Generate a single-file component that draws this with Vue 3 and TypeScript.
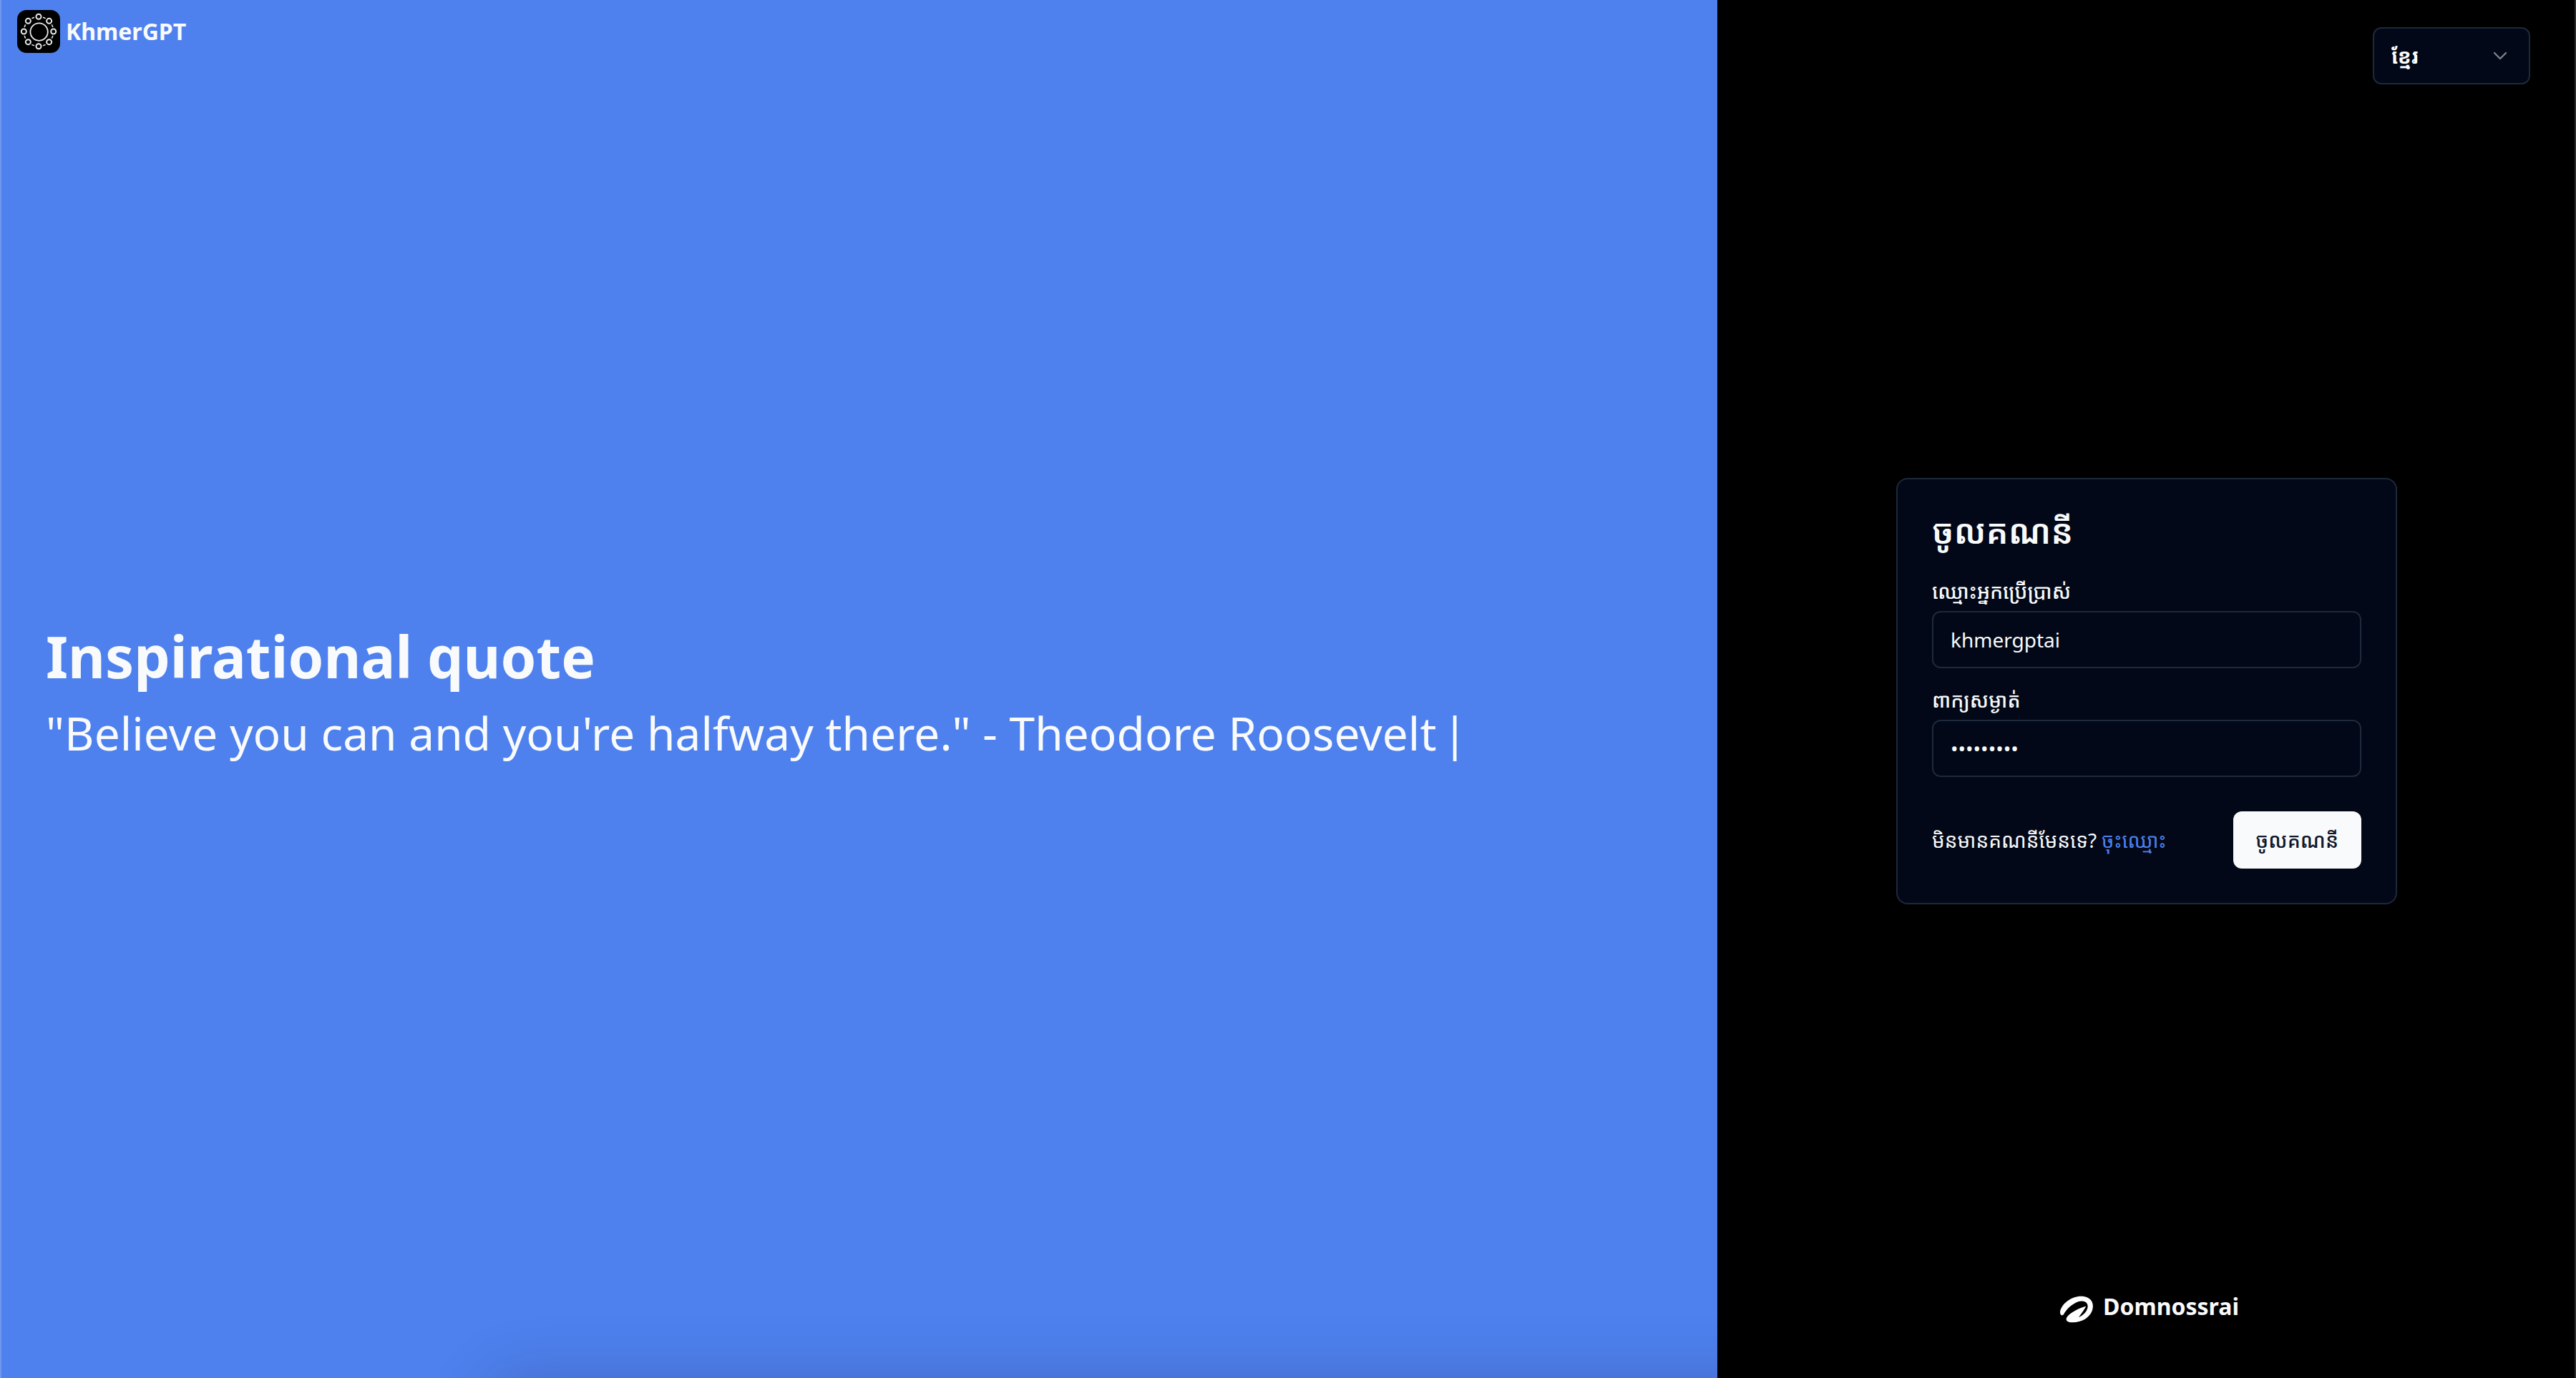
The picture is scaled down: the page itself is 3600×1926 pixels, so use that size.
<script setup lang="ts">
import { ref } from 'vue'

interface Language {
  code: string
  label: string
}

const languages: Language[] = [{ code: 'km', label: 'ខ្មែរ' }]
const language = ref('km')
const username = ref('khmergptai')
const password = ref('khmergpt1')
const quote = '"Believe you can and you\'re halfway there." - Theodore Roosevelt'

// Satellites sit every 45 degrees around the logo's centre.
const satellites = Array.from({ length: 8 }, (_, i) => {
  const angle = (i * Math.PI) / 4
  return { x: 30 + 20.7 * Math.cos(angle), y: 30 + 20.7 * Math.sin(angle) }
})
</script>

<template>
  <main class="page">
    <section class="hero">
      <header class="brand">
        <svg class="brand-logo" viewBox="0 0 60 60" aria-hidden="true">
          <rect width="60" height="60" rx="13" fill="#000" />
          <g fill="none" stroke="#ececec">
            <circle cx="30.6" cy="30.6" r="12.2" stroke-width="1.8" />
            <circle
              cx="30" cy="30" r="20.7" stroke-width="1.5" pathLength="80"
              stroke-dasharray="2.4 7.6" stroke-dashoffset="-3.8"
            />
            <circle
              v-for="(s, i) in satellites" :key="i"
              :cx="s.x" :cy="s.y" r="3.5" stroke-width="2" fill="#000"
            />
          </g>
        </svg>
        <span>KhmerGPT</span>
      </header>
      <div class="quote">
        <h1>Inspirational quote</h1>
        <p>{{ quote }}<span class="caret">|</span></p>
      </div>
      <div class="dock-shadow"></div>
    </section>

    <section class="side">
      <div class="topbar">
        <div class="language">
          <select v-model="language" aria-label="Language">
            <option v-for="l in languages" :key="l.code" :value="l.code">{{ l.label }}</option>
          </select>
          <svg class="chevron" viewBox="0 0 32 32" aria-hidden="true">
            <path d="M8 12l8 8 8-8" fill="none" stroke="#808289" stroke-width="2.4" stroke-linecap="round" stroke-linejoin="round" />
          </svg>
        </div>
      </div>

      <form class="card" @submit.prevent>
        <h2>ចូលគណនី</h2>
        <div class="field">
          <label for="username">ឈ្មោះអ្នកប្រើប្រាស់</label>
          <input id="username" v-model="username" type="text" autocomplete="username" />
        </div>
        <div class="field">
          <label for="password">ពាក្យសម្ងាត់</label>
          <input id="password" v-model="password" type="password" autocomplete="current-password" />
        </div>
        <div class="actions">
          <p>មិនមានគណនីមែនទេ? <a href="#register">ចុះឈ្មោះ</a></p>
          <button type="submit">ចូលគណនី</button>
        </div>
      </form>

      <footer class="maker">
        <svg class="maker-logo" viewBox="0 0 180 180" aria-hidden="true">
          <path
            fill="#fff"
            d="M24 112 C23 127 32 131 39 124 C50 102 72 80 102 69 C124 63 141 72 140 91 C139 110 122 127 102 136 C113 120 126 102 133 89 C112 93 67 114 53 134 C44 149 55 157 78 157 C114 157 147 138 158 109 C170 77 154 47 112 47 C72 47 30 78 24 112 Z"
          />
        </svg>
        <span>Domnossrai</span>
      </footer>
    </section>
  </main>
</template>

<style>
body {
  margin: 0;
  background: #000;
}
</style>

<style scoped>
* {
  box-sizing: border-box;
}

.page {
  display: grid;
  grid-template-columns: 2fr 1fr;
  min-height: 100vh;
  color: #f8fafc;
  font-family: "Noto Sans", "Noto Sans Khmer", "Khmer OS", sans-serif;
  font-size: 28px;
  line-height: 40px;
}

h1,
h2,
p {
  margin: 0;
}

.hero {
  position: relative;
  display: flex;
  flex-direction: column;
  overflow: hidden;
  border-left: 2px solid #7297ee;
  background: #4e81ee;
}

.brand {
  display: flex;
  align-items: center;
  gap: 8px;
  height: 88px;
  padding-left: 22px;
  font-size: 32px;
  font-weight: 700;
}

.brand-logo,
.maker-logo {
  width: 60px;
  height: 60px;
}

.quote {
  display: flex;
  flex: 1;
  flex-direction: column;
  justify-content: center;
  padding: 0 62px 72px;
}

.quote h1 {
  font-size: 80px;
  font-weight: 700;
  line-height: 108px;
}

.quote p {
  font-size: 64px;
  line-height: 108px;
}

.caret {
  margin-left: 8px;
}

/* Soft shade rising from below the lower edge of the window */
.dock-shadow {
  position: absolute;
  top: 100%;
  right: -200px;
  left: 680px;
  height: 200px;
  border-radius: 40px;
  box-shadow: 0 0 88px rgb(30 10 30 / 18%);
}

.side {
  display: flex;
  flex-direction: column;
  align-items: center;
  justify-content: space-between;
  background: #000;
  box-shadow: inset -2px 0 #2c2c2c;
}

.topbar {
  display: flex;
  justify-content: flex-end;
  width: 100%;
  padding: 38px 64px 0 0;
}

.language {
  position: relative;
}

.language select {
  width: 220px;
  height: 80px;
  padding: 0 24px;
  appearance: none;
  border: 2px solid #1e293b;
  border-radius: 12px;
  background: #020817;
  color: #fff;
  font: inherit;
  font-weight: 700;
}

.chevron {
  position: absolute;
  top: 24px;
  right: 26px;
  width: 32px;
  height: 32px;
  pointer-events: none;
}

.card {
  display: flex;
  flex-direction: column;
  width: 700px;
  margin-top: 18px;
  padding: 48px;
  border: 2px solid #1e293b;
  border-radius: 16px;
  background: #020817;
}

.card h2 {
  margin-bottom: 40px;
  font-size: 47px;
  font-weight: 600;
  line-height: 48px;
}

.field {
  display: flex;
  flex-direction: column;
  gap: 8px;
  margin-bottom: 24px;
}

.field label {
  font-weight: 500;
}

.field input {
  width: 100%;
  height: 80px;
  padding: 0 24px;
  border: 2px solid #1e293b;
  border-radius: 12px;
  background: transparent;
  color: #f8fafc;
  font: inherit;
}

.actions {
  display: flex;
  align-items: center;
  justify-content: space-between;
  margin-top: 24px;
}

.actions a {
  color: #4e81ee;
  text-decoration: none;
}

.actions button {
  height: 80px;
  padding: 0 32px;
  border: 0;
  border-radius: 12px;
  background: #f8fafc;
  color: #0f172a;
  font: inherit;
  font-weight: 500;
}

.maker {
  display: flex;
  align-items: center;
  gap: 8px;
  padding-bottom: 70px;
  font-size: 32px;
  font-weight: 700;
}
</style>
